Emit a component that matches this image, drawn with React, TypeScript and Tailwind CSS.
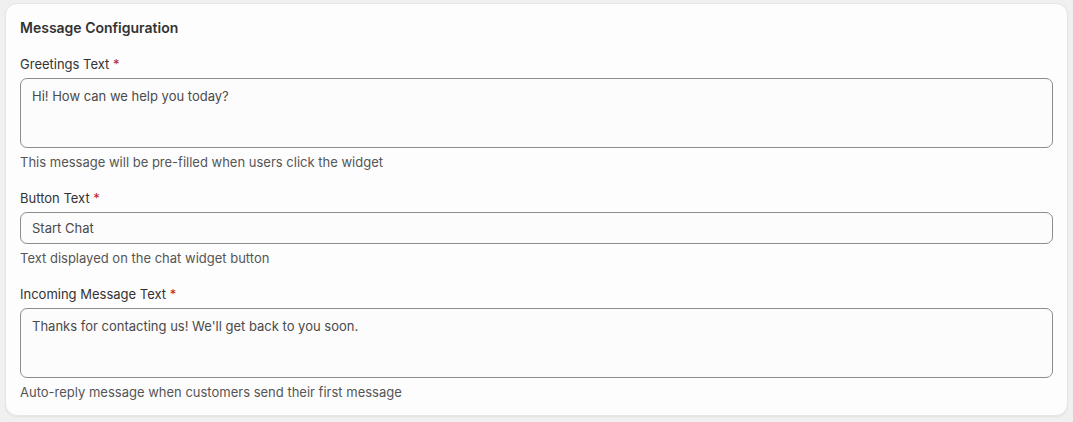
import { useState } from 'react';

type Field = {
  id: string;
  label: string;
  value: string;
  help: string;
  multiline: boolean;
};

const FIELDS: Field[] = [
  {
    id: 'greeting',
    label: 'Greetings Text',
    value: 'Hi! How can we help you today?',
    help: 'This message will be pre-filled when users click the widget',
    multiline: true,
  },
  {
    id: 'button',
    label: 'Button Text',
    value: 'Start Chat',
    help: 'Text displayed on the chat widget button',
    multiline: false,
  },
  {
    id: 'incoming',
    label: 'Incoming Message Text',
    value: "Thanks for contacting us! We'll get back to you soon.",
    help: 'Auto-reply message when customers send their first message',
    multiline: true,
  },
];

const inputCls =
  'block w-full rounded-[7px] border border-[#8c8c8c] bg-[#fcfcfc] px-[11px] text-[13px] text-[#4a4a4a] outline-none focus:border-[#555]';

export default function App() {
  const [values, setValues] = useState<Record<string, string>>(() =>
    Object.fromEntries(FIELDS.map((f) => [f.id, f.value])),
  );

  return (
    <div
      className="min-h-[422px] bg-[#f0f0f0] px-[5px] pt-[3px] pb-[6px]"
      style={{ fontFamily: 'Inter, "Noto Sans", sans-serif' }}
    >
      <div className="rounded-[12px] border border-[#e6e6e6] bg-[#fdfdfd] px-[14px] pt-[14px] pb-[13px] shadow-[0_1px_2px_rgba(0,0,0,0.06)]">
        <h2 className="text-[14px] leading-5 font-semibold text-[#333]">Message Configuration</h2>

        {FIELDS.map((f) => (
          <div key={f.id} className="mt-4">
            <label htmlFor={f.id} className="block text-[13px] leading-5 text-[#333]">
              {f.label} <span className="text-[#b3261e]">*</span>
            </label>
            {f.multiline ? (
              <textarea
                id={f.id}
                value={values[f.id]}
                onChange={(e) => setValues({ ...values, [f.id]: e.target.value })}
                className={`${inputCls} mt-1 h-[70px] resize-none py-[7px] leading-5`}
              />
            ) : (
              <input
                id={f.id}
                type="text"
                value={values[f.id]}
                onChange={(e) => setValues({ ...values, [f.id]: e.target.value })}
                className={`${inputCls} mt-1 h-8 leading-5`}
              />
            )}
            <p className="mt-1 text-[13px] leading-5 text-[#555]">{f.help}</p>
          </div>
        ))}
      </div>
    </div>
  );
}
